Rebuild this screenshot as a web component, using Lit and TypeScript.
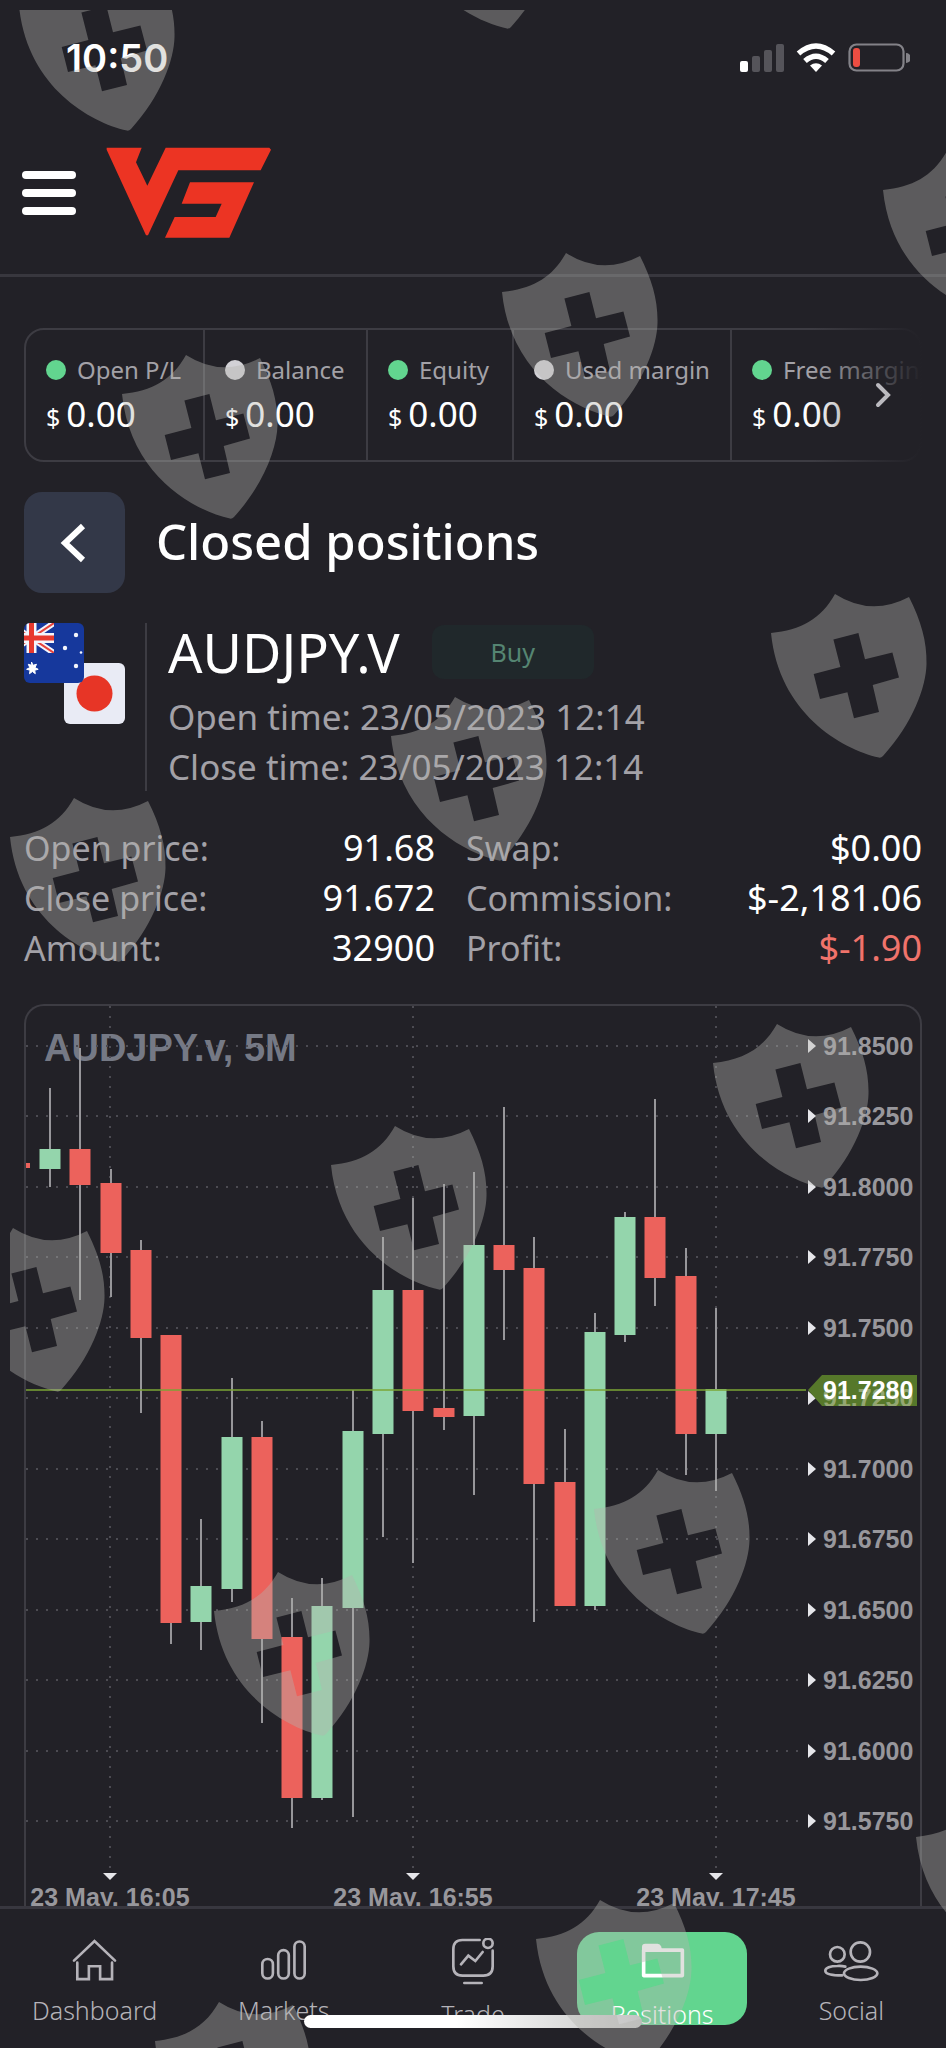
import { LitElement, html, svg, css } from "lit";
import { customElement } from "lit/decorators.js";
import { classMap } from "lit/directives/class-map.js";

type Candle = { up: boolean; open: number; close: number; high: number; low: number };

const c = (up: boolean, open: number, close: number, high: number, low: number): Candle => ({ up, open, close, high, low });

const CANDLES: Candle[] = [
  c(true, 1149, 1169, 1088, 1187),
  c(false, 1149, 1185, 1048, 1300),
  c(false, 1183, 1253, 1169, 1297),
  c(false, 1250, 1338, 1240, 1413),
  c(false, 1335, 1623, 1335, 1644),
  c(true, 1586, 1622, 1519, 1650),
  c(true, 1437, 1589, 1378, 1602),
  c(false, 1437, 1639, 1421, 1723),
  c(false, 1637, 1798, 1598, 1828),
  c(true, 1606, 1798, 1578, 1800),
  c(true, 1431, 1608, 1390, 1817),
  c(true, 1290, 1434, 1237, 1537),
  c(false, 1290, 1411, 1198, 1563),
  c(false, 1408, 1417, 1184, 1430),
  c(true, 1245, 1416, 1172, 1495),
  c(false, 1245, 1270, 1107, 1340),
  c(false, 1268, 1484, 1237, 1622),
  c(false, 1482, 1606, 1429, 1606),
  c(true, 1332, 1606, 1313, 1610),
  c(true, 1217, 1335, 1212, 1342),
  c(false, 1217, 1278, 1099, 1306),
  c(false, 1276, 1434, 1248, 1475),
  c(true, 1389, 1434, 1308, 1491),
];

const PRICES = ["91.8500", "91.8250", "91.8000", "91.7750", "91.7500", "91.7250", "91.7000", "91.6750", "91.6500", "91.6250", "91.6000", "91.5750"];

const TIMES = [
  { x: 110, label: "23 May, 16:05" },
  { x: 413, label: "23 May, 16:55" },
  { x: 716, label: "23 May, 17:45" },
];

const SHIELDS: [number, number][] = [
  [19, 6], [399, -96], [502, 292], [883, 190], [122, 394], [771, 633], [391, 736], [10, 837],
  [713, 1063], [331, 1165], [-51, 1267], [594, 1509], [214, 1611], [916, 1837], [536, 1939], [155, 2041],
];

@customElement("price-chart")
export class PriceChart extends LitElement {
  static styles = css`
    :host {
      display: block;
    }
    .plot {
      display: block;
      width: 100%;
      height: auto;
      font-family: "Liberation Sans", Arial, sans-serif;
      font-weight: 700;
      font-size: 25px;
    }
    .grid {
      stroke: #4c4b52;
      stroke-width: 2;
      stroke-dasharray: 2 8;
    }
    .name {
      fill: #757985;
      font-size: 38px;
    }
    .axis {
      fill: #98979c;
    }
    .marker {
      fill: #e6e6ea;
    }
    .wick {
      stroke: #97969a;
      stroke-width: 2;
    }
    .up {
      fill: #94d5ac;
    }
    .down {
      fill: #ec625c;
    }
    .last {
      stroke: #7ba436;
      stroke-opacity: 0.75;
      stroke-width: 2;
    }
    .tag {
      fill: #56782a;
    }
    .under {
      fill: #94a772;
    }
    .current {
      fill: #ffffff;
    }
  `;

  render() {
    return html`
      <svg class="plot" viewBox="26 1006 894 901" role="img" aria-label="AUDJPY.v five minute chart">
        <text class="name" x="44" y="1061">AUDJPY.v, 5M</text>
        ${PRICES.map((p, i) => {
          const y = 1046 + Math.floor(i * 70.5);
          return svg`<line class="grid" x1="26" x2="806" y1=${y} y2=${y} />
            <path class="marker" d="M808 ${y - 7} l8 7 l-8 7z" />
            ${p === "91.7250" ? "" : svg`<text class="axis" x="823" y=${y + 9}>${p}</text>`}`;
        })}
        ${TIMES.map(
          (t) => svg`<line class="grid" x1=${t.x} x2=${t.x} y1="1006" y2="1873" />
            <path class="marker" d="M${t.x - 7} 1873 h14 l-7 7z" />
            <text class="axis" x=${t.x} y="1906" text-anchor="middle">${t.label}</text>`
        )}
        <rect class="down" x="26" y="1163" width="4" height="5" />
        ${CANDLES.map((k, i) => {
          const x = Math.round(50 + i * 30.27);
          return svg`<line class="wick" x1=${x} x2=${x} y1=${k.high} y2=${k.low} />
            <rect class=${k.up ? "up" : "down"} x=${x - 10.5} y=${k.open} width="21" height=${k.close - k.open} />`;
        })}
        <line class="last" x1="26" x2="806" y1="1390" y2="1390" />
        <path class="tag" d="M808 1390 L822 1375 H917 V1406 H822z" />
        <clipPath id="tag-area"><rect x="808" y="1375" width="109" height="31" /></clipPath>
        <text class="under" x="823" y="1407" clip-path="url(#tag-area)">91.7250</text>
        <text class="current" x="823" y="1399">91.7280</text>
      </svg>
    `;
  }
}

@customElement("shield-overlay")
export class ShieldOverlay extends LitElement {
  static styles = css`
    :host {
      position: absolute;
      inset: 10px 0 0 10px;
      overflow: hidden;
      pointer-events: none;
    }
    .layer {
      display: block;
      width: 100%;
      height: 100%;
    }
    .shield {
      fill: rgb(181, 181, 174);
      fill-opacity: 0.4;
      fill-rule: evenodd;
    }
  `;

  render() {
    const shape =
      "M0 0 C30 -3 50 -14 64 -39 Q100 -16 138 -36 C150 -12 156 8 155.5 31 C155 54 142 90 112 123 Q110 125 108 124.6 C70 116 8 80 0 0Z " +
      "M62.4 6.6 L87.4 0 L94 26.3 L121.4 19.6 L128 44.6 L101.7 52 L108 79 L83 85.3 L76.4 59.3 L49 66 L42.7 41 L69.4 34Z";
    return html`
      <svg class="layer" aria-hidden="true">
        ${SHIELDS.map(([x, y]) => svg`<path class="shield" transform="translate(${x - 10} ${y - 10})" d=${shape} />`)}
      </svg>
    `;
  }
}

const STATS = [
  { label: "Open P/L", on: true },
  { label: "Balance", on: false },
  { label: "Equity", on: true },
  { label: "Used margin", on: false },
  { label: "Free margin", on: true },
];

const DETAILS = [
  [
    ["Open price:", "91.68"],
    ["Close price:", "91.672"],
    ["Amount:", "32900"],
  ],
  [
    ["Swap:", "$0.00"],
    ["Commission:", "$-2,181.06"],
    ["Profit:", "$-1.90"],
  ],
];

const NAV = [
  {
    label: "Dashboard",
    icon: html`<svg class="icon" width="45" height="44" viewBox="216 262 136 132">
      <path d="M222 330 L284 271 L346 330 M232 336 V386 H267 V347 H301 V386 H337 V336" />
    </svg>`,
  },
  {
    label: "Markets",
    icon: html`<svg class="icon" width="47" height="44" viewBox="784 262 142 132">
      <rect x="791" y="325" width="32" height="59" rx="16" />
      <rect x="839" y="298" width="32" height="86" rx="16" />
      <rect x="888" y="272" width="31" height="112" rx="15.5" />
    </svg>`,
  },
  {
    label: "Trade",
    icon: html`<svg class="icon" width="44" height="48" viewBox="1356 262 132 144">
      <path d="M1442 268 H1390 Q1363 268 1363 296 V347 Q1363 375 1390 375 H1453 Q1481 375 1481 347 V300 M1396 397 H1448 M1386 341 L1408 315 L1429 331 L1451 304" />
      <circle cx="1467" cy="278" r="14" />
    </svg>`,
  },
  {
    label: "Positions",
    active: true,
    icon: html`<svg class="icon" width="45" height="48" viewBox="502 262 136 144">
      <path class="folder" d="M513 298 H630 V375 H513z" />
      <path class="tab" d="M508 300 V288 Q508 279 518 279 H555 Q563 279 566 287 L570 302z" />
    </svg>`,
  },
  {
    label: "Social",
    icon: html`<svg class="icon" width="57" height="44" viewBox="1050 262 171 132">
      <circle cx="1093" cy="311" r="22" />
      <circle cx="1162" cy="304" r="29" />
      <ellipse cx="1163" cy="368" rx="50" ry="20" />
      <path d="M1117 348 Q1105 345 1093 346 C1072 346 1057 352 1057 360 C1057 369 1074 374 1108 374" />
    </svg>`,
  },
];

@customElement("app-root")
export class AppRoot extends LitElement {
  static styles = css`
    :host {
      position: relative;
      display: flex;
      flex-direction: column;
      height: 100vh;
      overflow: hidden;
      background: #222127;
      color: #ffffff;
      font-family: "Noto Sans", sans-serif;
      font-size: 34px;
    }
    * {
      box-sizing: border-box;
    }
    .status {
      display: flex;
      justify-content: space-between;
      align-items: center;
      height: 116px;
      padding: 0 36px 0 66px;
      font: 600 38px/44px "Inter", sans-serif;
    }
    .signals {
      display: flex;
      align-items: center;
      gap: 12px;
    }
    .header {
      display: flex;
      align-items: center;
      gap: 30px;
      padding: 30px 22px 35px;
      border-bottom: 3px solid #38373e;
    }
    button {
      display: flex;
      border: 0;
      padding: 0;
      background: none;
      color: inherit;
      font: inherit;
      cursor: pointer;
    }
    .menu {
      flex-direction: column;
      gap: 10px;
      width: 54px;
    }
    .bar {
      height: 8px;
      width: 100%;
      border-radius: 4px;
      background: #ffffff;
    }
    .logo {
      display: block;
      fill: #ec3423;
    }
    main {
      flex: 1;
      min-height: 0;
      padding: 51px 24px 0;
      overflow: hidden;
    }
    .stats {
      position: relative;
      height: 134px;
    }
    .cells {
      display: grid;
      grid-template-columns: 177fr 163fr 146fr 218fr 190fr;
      height: 100%;
      border: 2px solid #3d3c43;
      border-radius: 20px;
    }
    .cell {
      display: flex;
      flex-direction: column;
      justify-content: center;
      padding: 0 0 0 20px;
      border-left: 2px solid #3d3c43;
      white-space: nowrap;
    }
    .cell:first-child {
      border-left: 0;
    }
    .caption {
      display: flex;
      align-items: center;
      gap: 11px;
      color: #a3a1a7;
      font-size: 24px;
      line-height: 40px;
    }
    .dot {
      flex: none;
      width: 20px;
      height: 20px;
      border-radius: 50%;
      background: #d2d1d6;
    }
    .dot.on {
      background: #62d58f;
    }
    .money {
      display: flex;
      align-items: baseline;
      gap: 6px;
      font-size: 35px;
      line-height: 48px;
    }
    .sign {
      font-size: 25px;
    }
    .more {
      position: absolute;
      inset: 0 0 0 auto;
      width: 110px;
      align-items: center;
      justify-content: flex-end;
      padding-right: 30px;
      background: linear-gradient(90deg, rgba(34, 33, 39, 0), #222127);
    }
    .heading {
      display: flex;
      align-items: center;
      gap: 31px;
      margin-top: 30px;
    }
    h1,
    h2 {
      margin: 0;
      font-size: 49px;
      font-weight: 500;
      line-height: 60px;
    }
    h1 {
      padding-bottom: 4px;
    }
    h2 {
      font-size: 54px;
      font-weight: 400;
    }
    .back {
      width: 101px;
      height: 101px;
      padding-right: 3px;
      align-items: center;
      justify-content: center;
      border-radius: 18px;
      background: #333848;
    }
    .instrument {
      display: flex;
      gap: 20px;
      margin-top: 30px;
    }
    .flags {
      display: block;
    }
    .about {
      height: 168px;
      padding-left: 21px;
      border-left: 2px solid #3d3c43;
    }
    .pair {
      display: flex;
      align-items: center;
      gap: 32px;
      height: 58px;
      margin-bottom: 11px;
    }
    .side {
      width: 162px;
      border-radius: 12px;
      background: #20282b;
      color: #558572;
      font-size: 25px;
      line-height: 54px;
      text-align: center;
    }
    .when {
      color: #a3a1a7;
      font-size: 35px;
      line-height: 50px;
    }
    .details {
      display: grid;
      grid-template-columns: 411fr 456fr;
      gap: 31px;
      margin-top: 32px;
    }
    .list {
      margin: 0;
    }
    .row {
      display: flex;
      justify-content: space-between;
      line-height: 50px;
    }
    dt {
      color: #a3a1a7;
    }
    dd {
      margin: 0;
      font-size: 36px;
    }
    .loss {
      color: #f0736b;
    }
    .chart {
      margin-top: 31px;
      border: 2px solid #3d3c43;
      border-bottom: 0;
      border-radius: 20px 20px 0 0;
      overflow: hidden;
    }
    .nav {
      flex: none;
      display: grid;
      grid-template-columns: repeat(5, 1fr);
      justify-items: center;
      height: 142px;
      padding-top: 23px;
      border-top: 3px solid #38373f;
    }
    .item {
      display: flex;
      flex-direction: column;
      align-items: center;
      gap: 13px;
      width: 90%;
      height: 93px;
      padding-top: 6px;
      border-radius: 22px;
      overflow: hidden;
      color: #b5b3b9;
      font-weight: 300;
      font-size: 25px;
      line-height: 30px;
      text-decoration: none;
    }
    .item.active {
      background: #62d58f;
      color: #ffffff;
    }
    .icon {
      flex: none;
      fill: none;
      stroke: currentColor;
      stroke-width: 8;
      stroke-linecap: round;
    }
    .folder {
      stroke-width: 11;
      stroke-linejoin: round;
    }
    .tab {
      fill: currentColor;
      stroke: none;
    }
    .indicator {
      position: absolute;
      bottom: 20px;
      left: 50%;
      width: 338px;
      height: 13px;
      border-radius: 7px;
      background: linear-gradient(90deg, #ffffff 45%, #c4c4c4);
      transform: translateX(-50%);
    }
  `;

  private flags() {
    return html`<svg class="flags" width="101" height="101" viewBox="0 0 101 101" role="img" aria-label="Australia and Japan">
      <rect x="40" y="40" width="61" height="61" rx="6" fill="#e9ebf5" />
      <circle cx="70.5" cy="70.5" r="18" fill="#e73526" />
      <clipPath id="au"><rect width="60" height="60" rx="6" /></clipPath>
      <clipPath id="jack"><rect width="30" height="30" /></clipPath>
      <g clip-path="url(#au)">
        <rect width="60" height="60" fill="#16389c" />
        <g clip-path="url(#jack)">
          <path d="M-15 0 L30 30 M-15 30 L30 0" stroke="#f4f5fb" stroke-width="6" />
          <path d="M-15 0 L30 30 M-15 30 L30 0" stroke="#e8443c" stroke-width="2" />
          <path d="M7.5 0 V30 M0 15 H30" stroke="#f4f5fb" stroke-width="10" />
          <path d="M7.5 0 V30 M0 15 H30" stroke="#e8392e" stroke-width="5" />
        </g>
        <path d="M7.5 39 l1.5 3.300 3.500-1 -1.500 3.300 3.200 1.700 -3.500 .9 .6 3.500 -2.900-2.200 -2.900 2.200 .6-3.500 -3.500-.9 3.200-1.700 -1.500-3.300 3.500 1z" fill="#fff" stroke="#fff" />
        <g fill="#f4f5fb">
          <circle cx="52" cy="12" r="2.200" />
          <circle cx="41" cy="25" r="2.200" />
          <circle cx="52" cy="43" r="2.200" />
          <circle cx="57" cy="29.500" r="1.300" />
        </g>
      </g>
    </svg>`;
  }

  render() {
    return html`
      <div class="status">
        <time>10:50</time>
        <div class="signals">
          <svg width="44" height="28" viewBox="0 0 44 28" role="img" aria-label="Signal">
            <rect y="17" width="8" height="11" rx="2" fill="#fff" />
            <g fill="#55545a">
              <rect x="12" y="12" width="8" height="16" rx="2" />
              <rect x="24" y="6" width="8" height="22" rx="2" />
              <rect x="36" width="8" height="28" rx="2" />
            </g>
          </svg>
          <svg width="40" height="30" viewBox="0 0 40 30" role="img" aria-label="Wi-Fi">
            <g fill="none" stroke="#fff" stroke-width="5.500">
              <path d="M2.500 10.500 Q20 -4.500 37.500 10.500" />
              <path d="M9 18 Q20 8.500 31 18" />
            </g>
            <path d="M14 22.500 Q20 18 26 22.500 L20 29z" fill="#fff" />
          </svg>
          <svg width="62" height="30" viewBox="0 0 62 30" role="img" aria-label="Battery low">
            <rect x="1.500" y="1.500" width="54" height="26" rx="7" fill="none" stroke="#838288" stroke-width="2.200" />
            <path d="M58 10 a5 5 0 0 1 0 10z" fill="#838288" />
            <rect x="5" y="5" width="7" height="19" rx="3" fill="#ec4d42" />
          </svg>
        </div>
      </div>
      <header class="header">
        <button class="menu" aria-label="Menu"><span class="bar"></span><span class="bar"></span><span class="bar"></span></button>
        <svg class="logo" width="166" height="93" viewBox="318 438 498 279" role="img" aria-label="VS">
          <path d="M320 443 H425 L408 487 L442 557 L497 443 H808 L813 449 L782 511 H535 L444 706 L438 706 L320 449z" />
          <path d="M570 547 H762 L688 713 H495 L524 651 H647 L665 611 H545z" />
        </svg>
      </header>
      <main>
        <section class="stats">
          <div class="cells">
            ${STATS.map(
              (s) => html`<div class="cell">
                <div class="caption"><span class=${classMap({ dot: true, on: s.on })}></span>${s.label}</div>
                <div class="money"><span class="sign">$</span><span>0.00</span></div>
              </div>`
            )}
          </div>
          <button class="more" aria-label="More">
            <svg width="17" height="26" viewBox="0 0 17 26"><path d="M3 3 L13 13 L3 23" fill="none" stroke="#bbbabf" stroke-width="4" stroke-linecap="round" /></svg>
          </button>
        </section>
        <div class="heading">
          <button class="back" aria-label="Back">
            <svg width="26" height="40" viewBox="0 0 26 40"><path d="M23 3 L5 20 L23 37" fill="none" stroke="#fff" stroke-width="6" /></svg>
          </button>
          <h1>Closed positions</h1>
        </div>
        <section class="instrument">
          ${this.flags()}
          <div class="about">
            <div class="pair">
              <h2>AUDJPY.V</h2>
              <span class="side">Buy</span>
            </div>
            <div class="when">Open time: 23/05/2023 12:14</div>
            <div class="when">Close time: 23/05/2023 12:14</div>
          </div>
        </section>
        <section class="details">
          ${DETAILS.map(
            (list) => html`<dl class="list">
              ${list.map(
                ([k, v]) => html`<div class="row">
                  <dt>${k}</dt>
                  <dd class=${classMap({ loss: k === "Profit:" })}>${v}</dd>
                </div>`
              )}
            </dl>`
          )}
        </section>
        <section class="chart"><price-chart></price-chart></section>
      </main>
      <nav class="nav">
        ${NAV.map((n) => html`<a class=${classMap({ item: true, active: !!n.active })} href="#">${n.icon}<span>${n.label}</span></a>`)}
      </nav>
      <div class="indicator"></div>
      <shield-overlay></shield-overlay>
    `;
  }
}
